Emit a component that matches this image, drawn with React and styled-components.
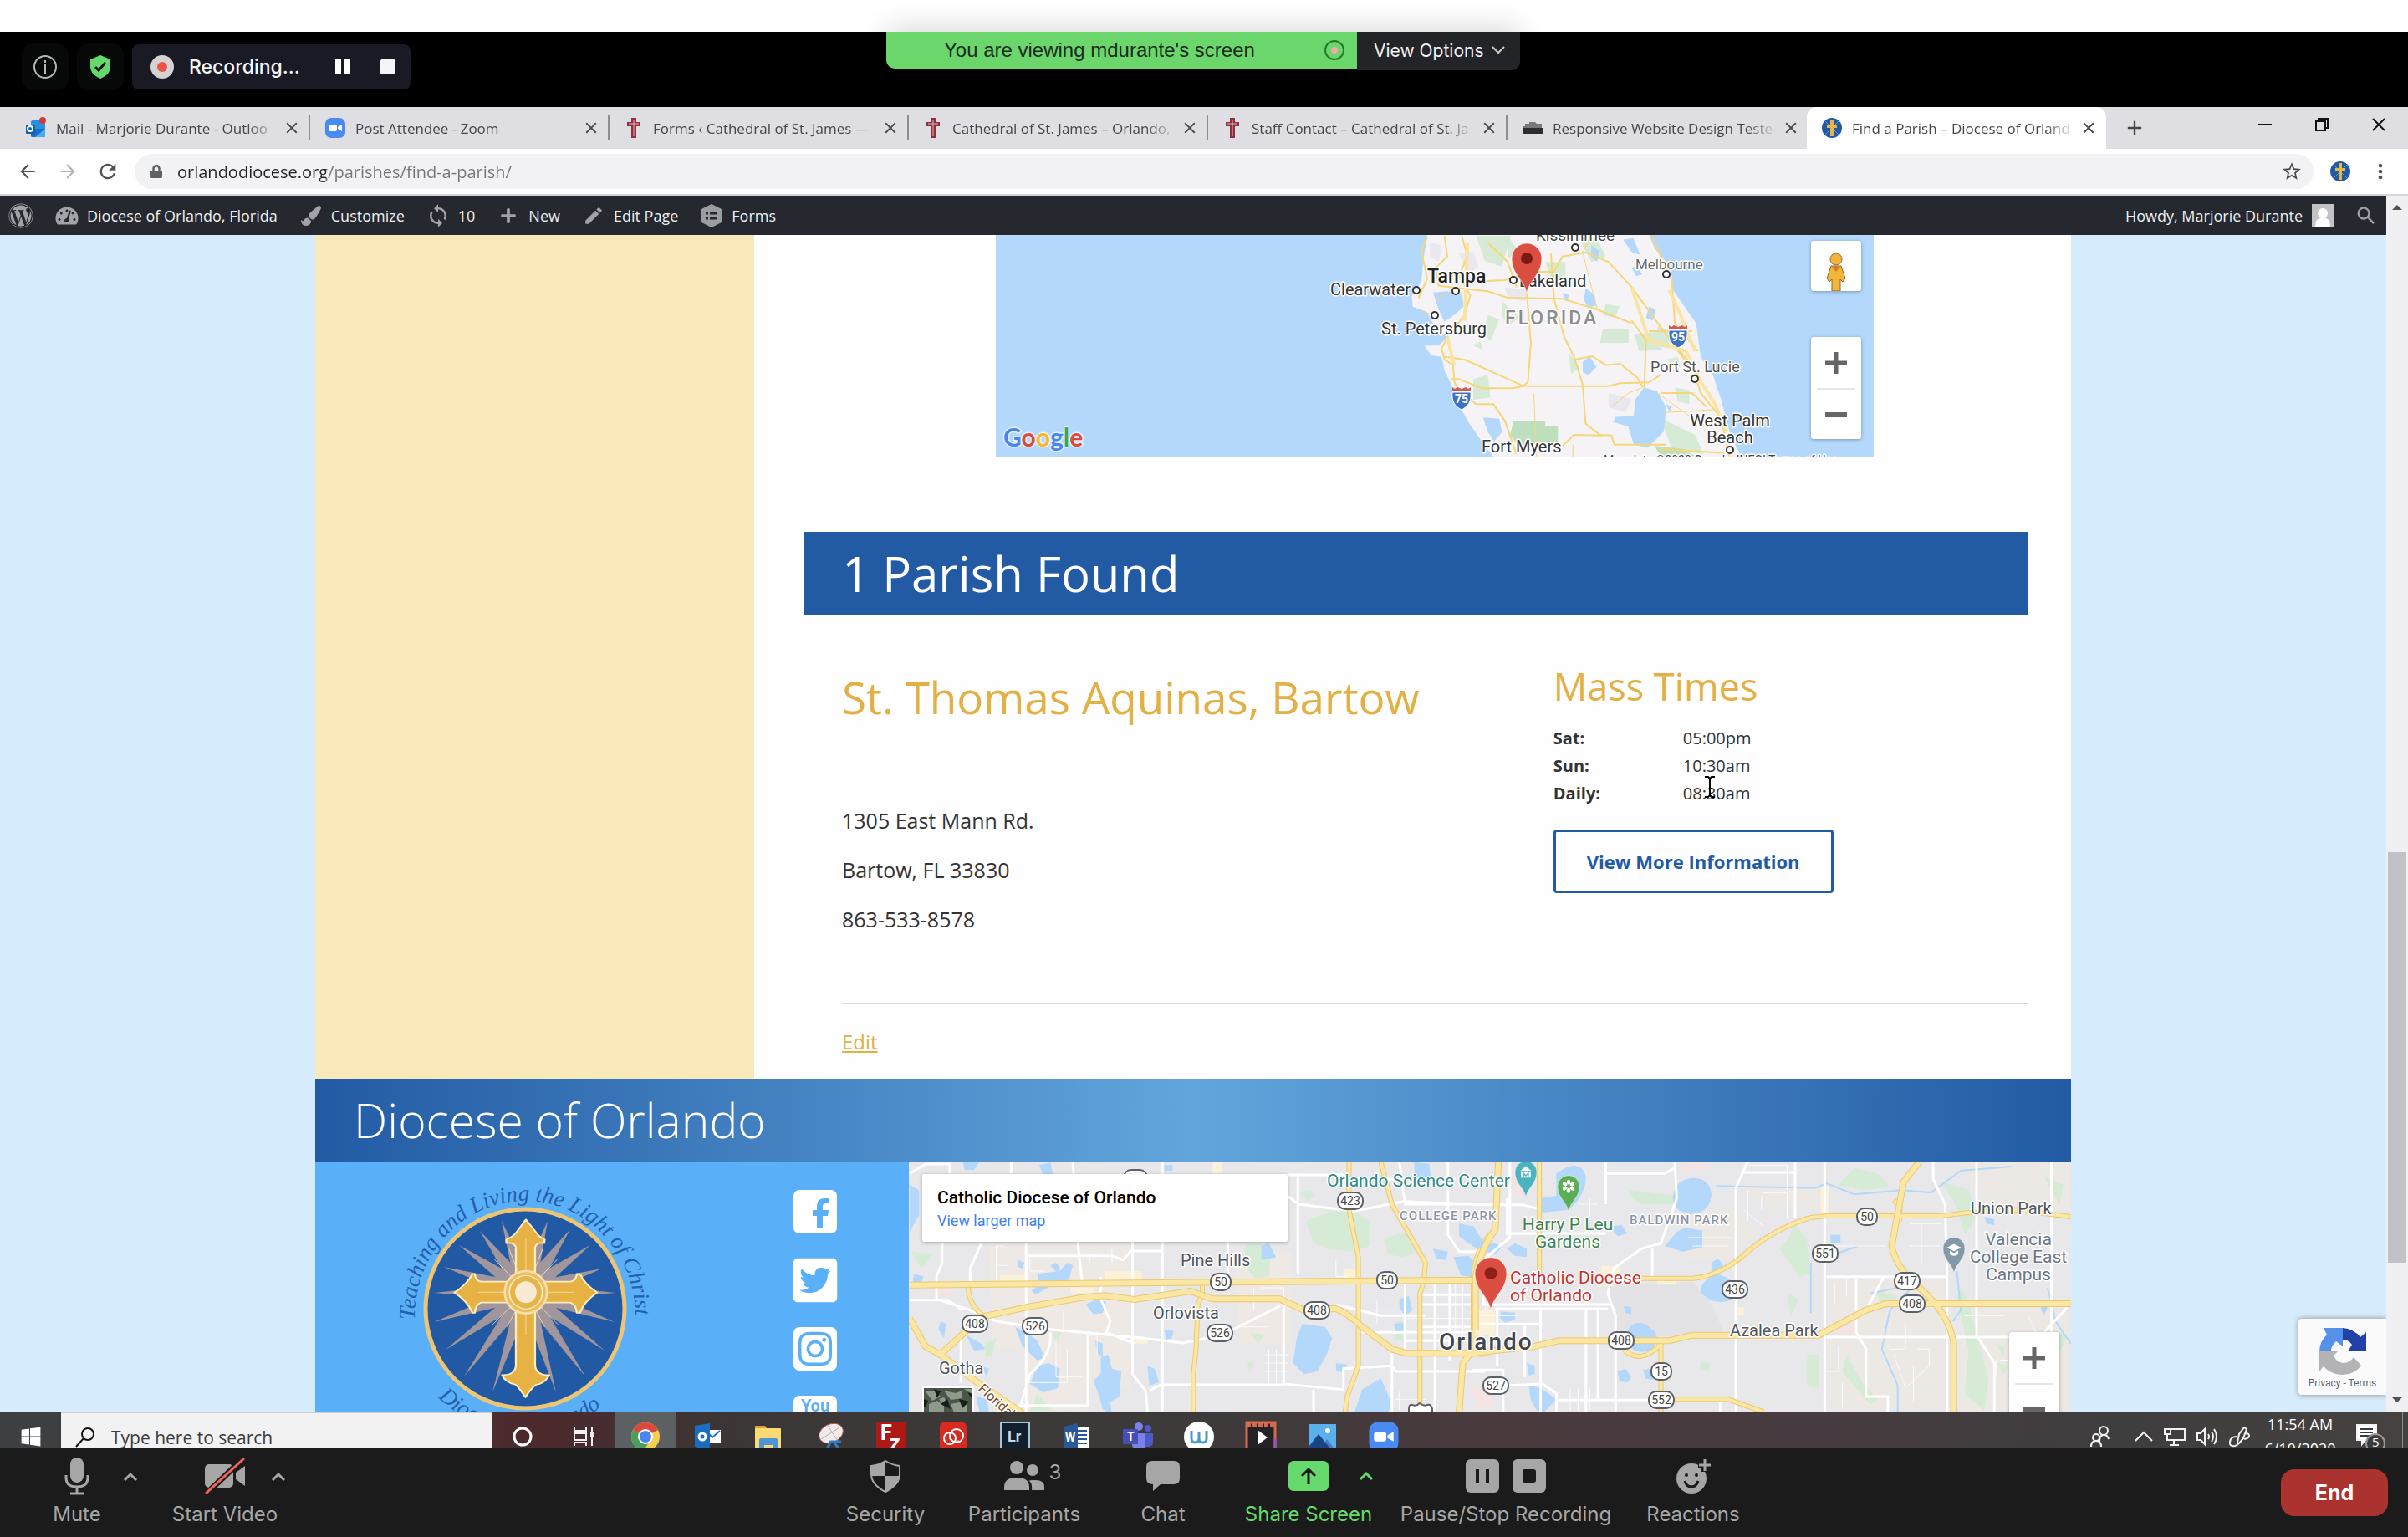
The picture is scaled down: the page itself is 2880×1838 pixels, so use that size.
import styled, { createGlobalStyle, css } from 'styled-components'
import { FaTwitterSquare, FaInstagram, FaWordpress, FaTachometerAlt, FaPaintBrush, FaPlus, FaWindows, FaLock } from 'react-icons/fa'
import { MdSync, MdEdit, MdStarBorder, MdMoreVert, MdSearch, MdClose, MdAdd, MdRefresh, MdArrowBack, MdArrowForward } from 'react-icons/md'

const tabs = [
  { title: 'Mail - Marjorie Durante - Outloo', icon: 'outlook' },
  { title: 'Post Attendee - Zoom', icon: 'zoom' },
  { title: 'Forms ‹ Cathedral of St. James —', icon: 'cross' },
  { title: 'Cathedral of St. James – Orlando,', icon: 'cross' },
  { title: 'Staff Contact – Cathedral of St. Ja', icon: 'cross' },
  { title: 'Responsive Website Design Teste', icon: 'media' },
  { title: 'Find a Parish – Diocese of Orland', icon: 'diocese', active: true },
]

const massTimes = [
  ['Sat:', '05:00pm'],
  ['Sun:', '10:30am'],
  ['Daily:', '08:30am'],
]

const Favicon = ({ name }) => {
  if (name === 'outlook') {
    return (
      <svg width="26" height="26" viewBox="0 0 26 26">
        <rect x="7" y="4" width="17" height="20" rx="2" fill="#2a8fe0" />
        <path d="M7 14h17v8a2 2 0 0 1-2 2H9a2 2 0 0 1-2-2z" fill="#1a6cc4" />
        <path d="M24 14 12 24h10a2 2 0 0 0 2-2z" fill="#3fb0f5" />
        <rect x="1" y="9" width="11" height="11" rx="1" fill="#1160b7" />
        <circle cx="6" cy="14" r="3" fill="none" stroke="#fff" strokeWidth="2" />
        <circle cx="21" cy="4" r="4" fill="#d33b3b" />
      </svg>
    )
  }
  if (name === 'zoom') return <ZoomLogo size={26} />
  if (name === 'cross') {
    return (
      <svg width="24" height="26" viewBox="0 0 24 26">
        <path d="M9 1h6v5h5v5h-5v14H9V11H4V6h5z" fill="#8d2f3c" />
        <path d="M12 3v20M6 8h12" stroke="#e5b9bc" strokeWidth="1" />
      </svg>
    )
  }
  if (name === 'media') {
    return (
      <svg width="26" height="24" viewBox="0 0 26 24">
        <path d="M1 10h3V7h5V5h7l2 2h6v7H1z" fill="#77787c" />
        <path d="M1 12h24v7H1z" fill="#2c2d31" />
      </svg>
    )
  }
  return (
    <svg width="26" height="26" viewBox="0 0 26 26">
      <circle cx="13" cy="13" r="12" fill="#1f5aa5" />
      <path d="m5 5 16 16M21 5 5 21" stroke="#7d93b5" />
      <path d="M11 3h4v6h4v4h-4v10h-4V13H7V9h4z" fill="#e7b649" />
    </svg>
  )
}

const ZoomLogo = ({ size }) => (
  <svg width={size} height={size} viewBox="0 0 26 26">
    <rect x="1" y="1" width="24" height="24" rx="7" fill="#4a8af4" />
    <rect x="5" y="9" width="10" height="8" rx="2" fill="#fff" />
    <path d="m16 12 5-3v8l-5-3z" fill="#fff" />
  </svg>
)

const Pin = ({ x, y, r, fill, dot, children }) => (
  <g transform={`translate(${x} ${y}) scale(${r / 18})`}>
    <path d="M0 0C-2-16-18-22-18-42a18 18 0 0 1 36 0C18-22 2-16 0 0z" fill={fill} stroke="#fff" strokeOpacity=".6" />
    {dot && <circle cy="-42" r="7" fill={dot} />}
    {children}
  </g>
)

const floridaLabels = [
  ['Clearwater', 400, 72],
  ['Lakeland', 626, 62],
  ['St. Petersburg', 461, 119],
  ['Fort Myers', 581, 260],
  ['West Palm', 878, 229, 'middle'],
  ['Beach', 878, 249, 'middle'],
]

const floridaTowns = [[693, 15], [802, 47], [550, 67], [503, 66], [619, 54], [525, 96], [836, 172], [878, 257]]

const Interstate = ({ x, y, n }) => (
  <g transform={`translate(${x} ${y})`}>
    <path d="M-11-7H11C12 4 8 10 0 14-8 10-12 4-11-7z" fill="#3f72c0" stroke="#fff" />
    <path d="M-11-8v-5l3 2 3-2 5 2 5-2 3 2 3-2v5z" fill="#ce5b56" />
    <text y="6" fontSize="14" fontWeight="700" fill="#fff" textAnchor="middle">{n}</text>
  </g>
)

const FloridaMap = () => (
  <MapSvg viewBox="0 0 1050 265" preserveAspectRatio="xMidYMid slice">
    <rect width="1050" height="265" fill="#b3d8fb" />
    <Terrain transform="translate(-11 -11) scale(.6888 .3333)">
      <path fill="#f5f3f6" d="M765 30 758 130 755 200 738 250 740 290 765 310 775 350 800 400 785 430 760 430 772 465 790 470 795 520 805 560 820 640 835 700 850 745 865 790 880 828H1310L1290 740 1275 620 1262 540 1240 470 1232 350 1192 230 1188 150 1160 80 1150 30z" />
      <path fill="#d6ead5" d="M850 36h60l-15 110-30-20zM970 130h35v60h-25zM1030 50h30l15 60-25 20zM895 270l30 60-20 30-10-40zM870 320l20 15-15 80-12-30zM1070 370h45v50h-50zM1125 390l40-10 8 65-40 5zM845 550l25-15 5 80-30 10zM1165 360l25 20-5 60-20-10zM1170 690l60 60 15 70-55-20zM1010 450l20 60-15 20zM1180 480l20-10 5 40zM1195 580l25 10v50l-20-10zM1075 280l25 10-10 40-20-10zM905 36l20 60-20 20zM845 430l12-15 4 30z" />
      <path fill="#bddfbd" d="M915 700h55v20h22v60h-35l-30 20-18-50zM1160 790l50 10 20 26h-60zM1340 36h-10z" />
      <path fill="#e9e8ee" d="M820 100l25-10 10 60-20 20zM1080 600l40 20-10 50-30-20zM770 60l20 10-5 60-15-20zM900 220l40 10-5 40-30-10z" />
      <path fill="#b3d8fb" d="M775 240 800 235 826 245 828 290 815 315 795 345 785 300zM1142 580l22 14 16 58-4 86-28 58-24-10-10-66-26-16 4-18 32-6 2-56zM1035 490l12-22 12 38-14 30-10-12zM862 688l28 4 5 48-14 34-11-36zM1040 225l15 20 4 40-14 10-8-30zM1050 70l14 20-4 40-10-20zM1105 50l18-6 12 60-14-8zM1150 290l12 10-5 40-12-10zM1180 640l10 10-4 20zM1120 150l10-5 8 30-10 6zM1000 240l12 10-6 22z" />
      <g fill="none" stroke="#f5d777" strokeWidth="2">
        <path d="M795 36 800 110 780 150 785 215 825 225 870 235 905 258 1000 262 1060 300 1120 350M825 36 835 110 820 180 840 250 830 320 800 400 790 440 795 480 810 500 812 560 820 590 850 640 880 640 900 700 920 820M840 200 900 195 950 165 985 165 1000 110 1040 95 1080 130 1120 220 1240 560M938 240 945 420 940 560 932 575M870 60 905 130 920 220M980 100 985 260 1003 400 1020 470 1035 570 1040 710 1065 750 1085 752 1090 785H1180M805 550H820L860 583H915L932 575H1080L1100 565 1150 562 1170 535M795 470 830 480 900 545 932 575M1020 480 1052 468 1075 500 1100 495 1130 545 1140 580M1120 340 1145 410 1142 580M1150 378H1225M765 40 755 90 765 190 750 260M1155 36 1190 200 1195 350 1235 450M1145 410 1200 440 1225 500 1240 600 1275 690 1290 828M1170 600 1225 600 1250 650M1170 800 1280 815M1000 790 1020 750 1070 752" />
        <path d="M775 265 805 240 835 240M755 310 785 320M1085 650 1115 600 1140 580M1180 670 1260 660M1165 600 1225 690M950 600 955 828M1018 785V828M1050 36 1035 95 1060 300" strokeWidth="1" />
      </g>
      <g fill="none" stroke="#f9e5a0" strokeWidth="4">
        <path d="M1120 220 1150 410 1215 450 1240 560 1262 630 1285 740M800 400 812 500M1185 230 1205 320 1230 450M835 60 830 340" />
      </g>
    </Terrain>
    {floridaTowns.map(([x, y]) => (
      <circle key={`${x}-${y}`} cx={x} cy={y} r="4" fill="#fff" stroke="#333" strokeWidth="2" />
    ))}
    <Labels>
      {floridaLabels.map(([text, x, y, anchor]) => (
        <text key={text} x={x} y={y} textAnchor={anchor} fontSize="20" fill="#333">{text}</text>
      ))}
      <text x="693" y="7" fontSize="19" fill="#444" textAnchor="middle">Kissimmee</text>
      <text x="516" y="57" fontSize="23" fontWeight="500" fill="#222">Tampa</text>
      <text x="765" y="41" fontSize="17" fill="#6b6b6b">Melbourne</text>
      <text x="783" y="164" fontSize="18" fill="#555">Port St. Lucie</text>
      <text x="609" y="107" fontSize="23" fontWeight="500" fill="#8c8c90" letterSpacing="3">FLORIDA</text>
      <text x="727" y="274" fontSize="14" fill="#444">Map data ©2020 Google, INEGI    Terms of Use</text>
    </Labels>
    <Interstate x={816} y={121} n="95" />
    <Interstate x={557} y={195} n="75" />
    <Pin x={635} y={70} r={18} fill="#db4f42" dot="#7a1a12" />
    <GoogleText x="9" y="253">
      <tspan fill="#4a84ee">G</tspan><tspan fill="#dc4a3d">o</tspan><tspan fill="#f2b928">o</tspan>
      <tspan fill="#4a84ee">g</tspan><tspan fill="#3aa757">l</tspan><tspan fill="#dc4a3d">e</tspan>
    </GoogleText>
  </MapSvg>
)

const neighborhoods = [
  ['Pine Hills', 325, 125],
  ['Orlovista', 292, 188],
  ['Gotha', 36, 254],
  ['Azalea Park', 982, 209],
  ['Union Park', 1270, 63],
]

const landmarks = [
  ['Orlando Science Center', 500, 30, '#2f8a86'],
  ['Harry P Leu', 788, 82, '#3a8450', 'middle'],
  ['Gardens', 788, 103, '#3a8450', 'middle'],
  ['Valencia', 1327, 100, '#6c7684', 'middle'],
  ['College East', 1327, 121, '#6c7684', 'middle'],
  ['Campus', 1327, 142, '#6c7684', 'middle'],
  ['Catholic Diocese', 719, 146, '#c5322b'],
  ['of Orlando', 719, 167, '#c5322b'],
]

const routes = [
  [423, 528, 47], [50, 373, 144], [50, 572, 142], [408, 79, 194], [526, 151, 197], [526, 372, 205],
  [408, 488, 178], [50, 1146, 66], [551, 1096, 110], [436, 988, 153], [417, 1194, 143], [408, 1200, 170],
  [408, 852, 214], [15, 900, 251], [552, 900, 285], [527, 702, 268],
]

const westHighways = 'M18 470 850 460 1530 452M18 590 60 690 100 720 200 820 320 930M100 720 210 585 330 550 480 515 540 508 620 522 770 492 830 520H1010L1070 558 1160 555Q1190 570 1230 620L1310 700 1350 715H1575M1490 925 1500 750 1530 700V440Q1535 350 1575 290'
const westRoads = 'M1195 28V200L1220 370V760L1190 870 1185 925M1280 28 1310 180 1400 390 1395 460 1385 500V925M802 470V500L790 540 785 700 778 790V925M175 475Q175 540 215 580'
const eastHighways = 'M10 630V440Q20 350 60 270L68 30M0 716 60 705 160 690 220 670H500L560 650H880L1000 560 1050 537H1519M1135 28 1095 100 1065 330Q1070 380 1110 450 1210 560 1222 680V925'
const eastRoads = 'M430 446H560Q620 440 680 375 760 270 860 228L900 222H1190L1260 210 1380 200 1519 225M172 28V440M480 680V925M480 880H650L740 925M385 700Q430 760 480 680M0 440H100M1070 180Q1090 140 1085 240'

const OrlandoMap = () => (
  <MapSvg viewBox="0 0 1390 299" preserveAspectRatio="xMinYMin slice">
    <rect width="1390" height="299" fill="#e8e7ea" />
    <Terrain transform="translate(-7 -9) scale(.4464 .3333)">
      <path fill="#eee9e4" d="M230 320h380v520H500v80H330V700H240zM890 350h150v330H900z" />
      <path fill="#fbf1d8" d="M260 435h70v30h-70zM540 420h100v50H540zM610 660h45v20h-45zM1180 410h35v35h-35zM830 28h25v40h-25zM450 478h60v20h-60z" />
      <path fill="#f5e2e2" d="M80 480h50v30H80zM1520 830h48v40h-48z" />
      <path fill="#d5ebd5" d="M1080 240l60-30 60-10 50 40v90l-50 20-60-10-40-20zM920 320h40l25 60-5 60-40 5-30-60zM1290 300l60-20 40 60-50 30-40-10zM1065 140l25-10 15 20-20 20zM220 680l30-20-10 60-20 10zM400 640h25l-15 40zM20 350l60 10-30 50zM360 860l40 60h-60zM930 640l40 10-20 30zM920 740l20 10-10 30zM1320 600h20v70h-20z" />
      <path fill="#b3d8fb" d="M18 110l25 20v90l-25 60zM30 430l25 10-10 40-20-15zM160 28h45l-15 30h-25zM365 40l30-10 10 60-20 15zM700 40h22v20h-22zM360 430l60-10 20-30 15 10-10 50-50 25-40 30-10-15 20-20zM395 400l15-10 12 20-10 15zM310 380l15 10-5 20-12-5zM490 540l30-20 25 10-10 40-25 5zM300 620l30 20 30 30 20 60-20 10-40-50zM360 760l30-10 30 20-5 70-40 15-35-30zM530 730l20-10 10 50 25 10-5 90-25 20 5 45-25-20-10-50-15-50 20-30zM515 670l20 10v50l-15-15zM655 760l20 10 10 50-25 10zM700 630l25 5-5 25-15 5zM1070 610l60 10 20 40-15 60-25 60-35 10-30-40 10-90zM1210 925l20-80 50-40 30 90-10 30zM1330 520l25-10 10 50-20 20-15-30zM1315 610l25-5v35l-20-5zM960 330l20-10 20 50-40 10zM1370 30l40 5 5 60-25 10-20-30zM1490 250l40 10 20 50-30 15-30-30zM1420 340l40 10-5 30-25-5zM1475 370l40-5 30 40-10 40-40-10zM1160 750l30 5-10 30-20-10zM170 650l40 30 10 20-30 5zM195 870l30 10 5 45h-25zM210 760l20 10-5 30zM100 600l15 10-5 50-15-30z" />
      <g fill="none" stroke="#fbfbfd" strokeWidth="1">
        <path d="M250 330v140M270 330h-20v70h30M340 360v60h40M560 340v50M500 360v30M410 660v140H480M440 700v120H340M520 640v80M430 560v70M370 560h60M940 480v80M960 480h60v70M900 620h80M980 700v130M1000 700v130M970 720h60M970 750h60M970 780h60M1160 380v60h30M1330 850v70M1320 880h80M1480 460v200M1500 460v200M1560 500v100M1340 590h200M1340 560h180M1270 520v90M1250 560h70" />
      </g>
      <g fill="none" stroke="#fff" strokeWidth="3">
        <path d="M18 70 60 36H125V70M105 318V390L90 440V520L180 560 250 600 400 630 640 660 750 678 800 665 870 640 1010 545M18 524H120L160 560M210 320 180 410V470M290 28V70M330 320V925M455 28 470 340 480 460M530 440V520L555 600 545 640 620 680M615 60V790L650 850 655 925M695 28V930M695 348H610L590 380 560 365H330M1058 70V430M1030 150 1060 180 1210 205 1340 170 1568 182M1030 75H1200M870 300V460M1020 540V825L1180 845M660 850 690 828H1020M1180 845V770L1310 760 1320 780H1560M1310 715V925M1345 460V715M1425 460V925M1465 450V740M1385 505H1530M1385 540H1530M1385 620H1530M1160 540 1280 580H1400M1460 28V290L1490 350H1550M1330 28 1345 180H1568M155 640V820M395 640Q400 720 340 790L310 925M310 902H495V640M1230 640H1530M1345 670H1530M1100 845V925M1385 460H1530M1260 90H1480" />
      </g>
      <Road d={westRoads} $edge />
      <Road d={westRoads} />
      <Road d={westHighways} $edge $wide />
      <Road d={westHighways} $wide />
    </Terrain>
    <Terrain transform="translate(673 -9) scale(.4719 .3333)">
      <path fill="#e3e3e5" d="M350 470 560 460 600 520 640 640 500 655H370z" />
      <path fill="#ece8e4" d="M520 200h140l70 80-90 100H540zM680 120h200v80H760zM910 450h300v90H1000l-90 80zM1000 570h200v340H900V670zM1240 28h280v170h-230zM1240 560h270v360h-270z" />
      <path fill="#fbf1d8" d="M330 400l50 5-20 70h-40zM470 450h50v15h-50zM670 550h20v30h-20zM10 560h50v90H10zM885 120h20v110h-20z" />
      <path fill="#f5e2e2" d="M108 75h30v70h-30zM535 28h60v30h-60zM925 620h50v30h-50zM10 850h40v60H10z" />
      <path fill="#d5ebd5" d="M820 250l30 60 10 120-30 10-50-100 20-30zM970 50l60 20 30 50-70 10-60-20zM1190 100l70 30 20 100-30 60-20-100zM1240 480l20 50 50 280-10 110-50-60 10-150-30-200zM950 720l40 100 40 60-20 20-70-120zM850 720h30v120l-30-10zM400 130l60 10 60 10-10 30h-80l-30-30zM580 740l25 10-5 30-20-10zM1330 680l20 10v40zM1450 80l50 30-10 70zM1020 490l60 20-30 50zM700 610h40l-10 40zM1470 630l40 20-20 60zM800 500l30 20-20 60zM1330 750l30 10-10 30z" />
      <path fill="#b3d8fb" d="M215 70q60-60 75 10 0 70-45 120l-65 10-10-50 45-10zM560 86q45 0 48 60-5 65-50 70-45-5-48-60 5-65 50-70zM520 280l20-15 45 10v60l-50 15-45-20zM620 430q-45 30-38 70 40 50 80 20 20-70-42-90zM608 390l15-15 15 20-10 30h-20zM430 605q-40 0-35 60 10 60 60 40 40-60-25-100zM90 340l20-20 30 20v30l-30-5zM350 260l30-5 15 30-25 10zM910 290h25v30h-25zM370 780l20-10 15 30-10 20-20-5zM435 775l20-5 5 40-20-5zM1300 225l25 10v20l-20-5zM75 565l35 5v25l-25 10-15-20zM145 830l30 10 40 40-30 45-20-5-15-40zM0 260l30 50 50 20-20 30-60-30zM140 750l20 10v30l-15 5zM170 620l10 10-5 25zM1440 540l20 10-10 30zM385 545l20 5v25l-15-5z" />
      <path fill="none" stroke="#b3d8fb" strokeWidth="2" d="M620 115 870 122 900 105 970 145 1090 130 1165 138 1240 60 1370 45M1130 460 1060 560 1040 700 1080 830V925M1230 420 1240 560 1220 600M980 330 920 360M860 390V570M1010 500 1080 480M1460 480 1480 600 1519 680" />
      <g fill="none" stroke="#fbfbfd" strokeWidth="1">
        <path d="M690 40h110v90M700 130v110M740 140h60v90M550 300h110M560 330h90M690 200l50 60M920 460v80M950 450v60M1060 600v100h40v-90M1070 720l30 120 60-80v-60h-30M930 690v90h-30M1110 250h80v150M1140 250v150M1110 330h80M1250 580h100M1330 740v60M1410 580l20 60M1340 740h40v90M940 820v90M1120 760v130M735 150v50M40 500v80M20 580h100M300 160v60M270 180h50M250 840v80M270 840v80M300 840v80M900 330h150" />
      </g>
      <g fill="none" stroke="#fff" strokeWidth="3">
        <path d="M340 28V70H490L515 50M340 70V180M0 182H130L165 195M97 28V300L30 380V540H350M88 285H340M515 28 520 160 490 280 480 320 430 340 360 410 345 500 365 580V925M458 340V440M700 28 670 120V925M690 66H820V28M820 66V230M90 160V290M895 28V925M975 450V640L1000 700V870H1055V925M900 657H1440L1510 550M1170 28V90L1200 180 1205 440H900M1280 28V650L1325 750V925M1470 28V925M1045 440 1000 560M60 555H345M290 560V925M175 560V925M135 610V800M20 610H180M0 775H80V925M95 830 180 825 215 860V925M215 883H480M320 560V880M630 880V925M1205 440V925M65 560V760" />
      </g>
      <Road d={eastRoads} $edge />
      <Road d={eastRoads} />
      <Road d={eastHighways} $edge $wide />
      <Road d={eastHighways} $wide />
    </Terrain>
    {routes.map(([n, x, y]) => {
      const w = n > 99 ? 30 : 24
      return (
        <g key={`${n}-${x}`}>
          <rect x={x - w / 2} y={y - 10} width={w} height="20" rx="9" fill="#fff" stroke="#5c6168" strokeWidth="2" />
          <text x={x} y={y + 5} fontSize="14" fill="#444" textAnchor="middle">{n}</text>
        </g>
      )
    })}
    <rect x="257" y="10" width="28" height="20" rx="9" fill="#fff" stroke="#5c6168" strokeWidth="2" />
    <path d="M598 296q0-6 4-5 5 2 9-2 5 4 9 2 5-1 6 5v6h-28z" fill="#fff" stroke="#5c6168" strokeWidth="2" />
    <Labels>
      {neighborhoods.map(([text, x, y]) => (
        <text key={text} x={x} y={y} fill="#505560" fontSize="20">{text}</text>
      ))}
      {landmarks.map(([text, x, y, fill, anchor]) => (
        <text key={text} x={x} y={y} fill={fill} textAnchor={anchor} fontSize="21">{text}</text>
      ))}
      <text x="587" y="70" fontSize="15" fontWeight="500" fill="#8d93a8" letterSpacing="1">COLLEGE PARK</text>
      <text x="862" y="75" fontSize="15" fontWeight="500" fill="#8d93a8" letterSpacing="1">BALDWIN PARK</text>
      <text x="634" y="225" fontSize="28" fontWeight="500" fill="#44464e" letterSpacing="2">Orlando</text>
      <text transform="translate(82 273) rotate(42)" fontSize="16" fill="#7a4a1c">Florida's</text>
    </Labels>
    <Pin x={696} y={178} r={19} fill="#db4f42" dot="#8f1f17" />
    <Pin x={738} y={43} r={13} fill="#4bb3bf">
      <path d="M-9-44 0-52 9-44zM-8-42H8V-33H-8z" fill="#fff" />
      <path d="M-4-35v-5l4 4 4-4v5" stroke="#4bb3bf" strokeWidth="2" fill="none" />
    </Pin>
    <Pin x={789} y={60} r={13} fill="#5cae52">
      {[0, 60, 120, 180, 240, 300].map((a) => (
        <ellipse key={a} cx="0" cy="-49" rx="3" ry="4" fill="#fff" transform={`rotate(${a} 0 -42)`} />
      ))}
    </Pin>
    <Pin x={1250} y={134} r={13} fill="#8299a8">
      <path d="m-12-43 12-6 12 6-12 6zM-7-38v6q7 5 14 0v-6l-7 4z" fill="#fff" />
    </Pin>
    <rect x="16" y="269" width="62" height="34" fill="#fff" />
    <rect x="18" y="271" width="58" height="30" fill="#4b564b" />
    <path d="M20 275h12l6 6-10 5zM42 274l14 3 8-3v9l-14 2zM24 290l10-4 8 6v8H24zM50 290l20-4v14H54zM66 272h10v6zM36 284l6-2 4 6-6 2z" fill="#8f9a8d" />
    <path d="M30 272l8 3-4 8zM60 284l12 3-8 8zM38 290l8-6 4 12zM18 284l5 2-3 8h-2zM70 276l6 2v6z" fill="#171c1a" />
  </MapSvg>
)

const rays = [
  [600, 1460], [655, 1460], [574, 1472], [682, 1470], [549, 1489], [706, 1489], [531, 1515], [720, 1517],
  [519, 1546], [736, 1546], [519, 1581], [735, 1581], [533, 1614], [723, 1615], [555, 1646], [700, 1646],
  [589, 1665], [665, 1665],
]

const ray = ([x, y], half) => {
  const dx = x - 629
  const dy = y - 1545
  const len = Math.hypot(dx, dy)
  const cx = 629 + (dx / len) * 34
  const cy = 1545 + (dy / len) * 34
  const ox = (-dy / len) * half
  const oy = (dx / len) * half
  return `629,1545 ${cx + ox},${cy + oy} ${x},${y} ${cx - ox},${cy - oy}`
}

const DioceseSeal = () => (
  <svg width="320" height="310" viewBox="467 1389 320 310">
    <defs>
      <path id="motto" d="M496 1578A132 139 0 1 1 760 1572" />
      <path id="diocese" d="M524 1671A149 149 0 0 0 732 1671" />
    </defs>
    <circle cx="628" cy="1565" r="119" fill="#2259a5" stroke="#eec572" strokeWidth="5" />
    {rays.map((tip) => <polygon key={tip.join()} points={ray(tip, 7)} fill="#a0969c" />)}
    <g transform="translate(370 1280) scale(.4591 .3333)">
      <path
        d="M564 535 590 580Q600 600 613 607L612 620Q592 615 588 635V758H680Q695 755 697 730H705Q715 765 750 797 715 830 705 870H697Q695 840 680 833H588V1060Q592 1095 625 1093L622 1100Q610 1125 590 1128 575 1145 563 1173 550 1145 538 1128 510 1120 502 1093 535 1095 538 1060V833H447Q433 840 431 870H425Q413 830 378 797 413 765 425 730H431Q433 755 447 758H538V635Q533 615 513 620V607Q530 598 540 580Z"
        fill="#e5b243" stroke="#fcecc0" strokeWidth="5" strokeLinejoin="round"
      />
      <path d="m480 675 84 120 84-120M475 915l89-120 86 120M520 640l44 155 44-155M564 600v350M440 796h250M515 920l49-125 49 125" fill="none" stroke="#fbe6b4" strokeWidth="2" />
      <ellipse cx="564" cy="796" rx="58" ry="80" fill="#f6dfae" />
      <ellipse cx="564" cy="796" rx="52" ry="72" fill="#e9bd5c" />
      <ellipse cx="564" cy="796" rx="43" ry="60" fill="#e5b548" stroke="#fbe9c0" strokeWidth="4" />
      <ellipse cx="564" cy="796" rx="28" ry="39" fill="#faead3" />
    </g>
    <SealText><textPath href="#motto">Teaching and Living the Light of Christ</textPath></SealText>
    <SealText><textPath href="#diocese">Diocese of Orlando</textPath></SealText>
  </svg>
)

const AppIcon = ({ name }) => {
  const box = { width: 38, height: 38, viewBox: '0 0 38 38' }
  switch (name) {
    case 'Cortana':
      return <svg {...box}><circle cx="19" cy="19" r="10" fill="none" stroke="#fff" strokeWidth="3" /></svg>
    case 'Task View':
      return <svg {...box} fill="none" stroke="#f2f2f2" strokeWidth="2"><path d="M8 8v4h14V8M8 30v-4h14v4M8 15h14v8H8zM29 8v22" /><path d="M29 13v6" strokeWidth="4" /></svg>
    case 'Chrome':
      return (
        <svg {...box}>
          <circle cx="19" cy="19" r="17" fill="#f8cf4f" />
          <path d="M19 19 4 11A17 17 0 0 1 34 11z" fill="#d94a3d" />
          <path d="M19 19 4 11a17 17 0 0 0 13 25l8-14z" fill="#4a9f5c" />
          <circle cx="19" cy="19" r="8" fill="#4a84ee" stroke="#fff" strokeWidth="2" />
        </svg>
      )
    case 'Outlook':
      return (
        <svg {...box}>
          <rect x="18" y="11" width="17" height="16" fill="#fff" />
          <path d="m19 14 6 6 9-8" fill="none" stroke="#1c70c4" strokeWidth="2" />
          <path d="M4 6 22 3v32L4 31z" fill="#1c6cc2" />
          <circle cx="13" cy="19" r="4" fill="none" stroke="#fff" strokeWidth="3" />
        </svg>
      )
    case 'File Explorer':
      return (
        <svg {...box}>
          <path d="M3 6h12l3 4H3z" fill="#dca13b" />
          <rect x="3" y="9" width="31" height="25" rx="1" fill="#fada72" />
          <path d="M8 36V23q0-2 2-2h18q2 0 2 2v13h-6v-7H14v7z" fill="#4f94d6" />
        </svg>
      )
    case 'Snipping Tool':
      return (
        <svg {...box}>
          <ellipse cx="20" cy="15" rx="15" ry="11" fill="#f1eceb" stroke="#9b5a52" transform="rotate(-25 20 15)" />
          <path d="m8 22 22-14M16 6l12 18" stroke="#b5aeb0" />
          <path d="m20 24-6 12M22 24l8 10M20 25h12" stroke="#2f7cc4" strokeWidth="3" />
        </svg>
      )
    case 'FileZilla':
      return <svg {...box}><rect x="1" y="1" width="36" height="36" fill="#ad1a15" /><IconText x="6" y="23" fontSize="25">F</IconText><IconText x="17" y="35" fontSize="25">z</IconText></svg>
    case 'Creative Cloud':
      return (
        <svg {...box}>
          <rect x="3" y="2" width="32" height="34" rx="5" fill="#d92a22" />
          <circle cx="15" cy="21" r="7" fill="none" stroke="#fff" strokeWidth="2" />
          <circle cx="23" cy="18" r="8" fill="none" stroke="#fff" strokeWidth="2" />
          <path d="m15 21 3 3q4 3 8 0" fill="none" stroke="#fff" strokeWidth="2" />
        </svg>
      )
    case 'Lightroom':
      return <svg {...box}><rect x="2" y="2" width="34" height="36" fill="#10202d" stroke="#a9c4d4" strokeWidth="2" /><IconText x="10" y="25" fontSize="18" $color="#c5dbe8">Lr</IconText></svg>
    case 'Word':
      return (
        <svg {...box}>
          <rect x="16" y="8" width="18" height="25" fill="#fff" />
          <path d="M20 12h12M20 17h12M20 22h12M20 27h12" stroke="#2a569a" strokeWidth="2" />
          <path d="M4 7 21 3v33L4 32z" fill="#2a569a" />
          <IconText x="6" y="25" fontSize="14">W</IconText>
        </svg>
      )
    case 'Teams':
      return (
        <svg {...box}>
          <circle cx="20" cy="7" r="5" fill="#7b83eb" /><circle cx="31" cy="9" r="4" fill="#5059c9" />
          <path d="M26 15h11v10q0 6-6 6h-5z" fill="#5059c9" />
          <path d="M12 15h16v14q-2 8-8 8t-8-8z" fill="#7b83eb" />
          <rect x="1" y="10" width="18" height="18" rx="1" fill="#464eb8" />
          <IconText x="6" y="24" fontSize="14">T</IconText>
        </svg>
      )
    case 'Webex':
      return <svg {...box}><circle cx="19" cy="19" r="18" fill="#fff" /><path d="M10 12v9q0 5 4 5 5 0 5-5v-8 8q0 5 5 5 4 0 4-5v-9" fill="none" stroke="#4a9bc9" strokeWidth="3" /></svg>
    case 'Video Editor':
      return (
        <svg {...box}>
          <rect x="2" y="2" width="34" height="36" fill="#232327" stroke="#d9694e" strokeWidth="3" />
          <path d="M2 4h34" stroke="#d9694e" strokeWidth="6" strokeDasharray="5 2" />
          <path d="M36 22v16" stroke="#9256c4" strokeWidth="3" />
          <path d="m15 11 12 9-12 9z" fill="#fff" />
        </svg>
      )
    case 'Photos':
      return (
        <svg {...box}>
          <rect x="3" y="4" width="32" height="34" fill="#5ab0ea" />
          <path d="m24 22 11 14v2H14z" fill="#4f79c8" /><path d="m3 30 11-14 18 22H3z" fill="#1a4583" />
          <circle cx="25" cy="12" r="3" fill="#fff" />
        </svg>
      )
    default:
      return <ZoomLogo size={38} />
  }
}

const taskbarApps = [
  'Cortana', 'Task View', 'Chrome', 'Outlook', 'File Explorer', 'Snipping Tool', 'FileZilla', 'Creative Cloud',
  'Lightroom', 'Word', 'Teams', 'Webex', 'Video Editor', 'Photos', 'Zoom',
]

const Caret = ({ color = '#a6a6a6' }) => (
  <svg width="18" height="12" viewBox="0 0 18 12"><path d="m2 10 7-7 7 7" fill="none" stroke={color} strokeWidth="3" /></svg>
)

const ZoomControl = () => (
  <ZoomBox>
    <ZoomButton aria-label="Zoom in"><svg width="28" height="28" viewBox="0 0 28 28"><path d="M14 1v26M1 14h26" stroke="#666" strokeWidth="5" /></svg></ZoomButton>
    <ZoomButton aria-label="Zoom out"><svg width="28" height="28" viewBox="0 0 28 28"><path d="M1 14h26" stroke="#666" strokeWidth="6" /></svg></ZoomButton>
  </ZoomBox>
)

const MeetingHeader = () => (
  <>
    <TitleStrip />
    <MeetingBar>
      <BadgeButton aria-label="Meeting information">
        <svg width="30" height="30" viewBox="0 0 30 30" fill="none" stroke="#b5b5b5" strokeWidth="2"><circle cx="15" cy="15" r="13" /><path d="M15 12v11M15 7v3" /></svg>
      </BadgeButton>
      <BadgeButton aria-label="Encryption">
        <svg width="28" height="30" viewBox="0 0 28 30"><path d="m14 1 12 5v8c0 8-5 12-12 15C7 26 2 22 2 14V6z" fill="#66d96c" /><path d="m8 15 4 4 8-9" fill="none" stroke="#111" strokeWidth="3" /></svg>
      </BadgeButton>
      <RecordingPill>
        <svg width="28" height="28" viewBox="0 0 28 28"><circle cx="14" cy="14" r="14" fill="#d3d3d6" /><circle cx="14" cy="14" r="6" fill="#f0524a" /></svg>
        <span>Recording...</span>
        <PillButton aria-label="Pause recording"><svg width="18" height="18"><path d="M0 0h7v18H0zM11 0h7v18h-7z" fill="#fff" /></svg></PillButton>
        <PillButton aria-label="Stop recording"><svg width="18" height="18"><rect width="18" height="18" rx="2" fill="#f5f5f5" /></svg></PillButton>
      </RecordingPill>
      <ShareBanner>
        <ShareMessage>
          <span>You are viewing mdurante's screen</span>
          <svg width="24" height="24" viewBox="0 0 24 24"><circle cx="12" cy="12" r="11" fill="none" stroke="#257a2c" strokeWidth="2" /><circle cx="12" cy="12" r="4" fill="#f2a9a4" /></svg>
        </ShareMessage>
        <ViewOptions>
          View Options
          <svg width="16" height="10" viewBox="0 0 16 10"><path d="m1 1 7 7 7-7" fill="none" stroke="#ccc" strokeWidth="2" /></svg>
        </ViewOptions>
      </ShareBanner>
    </MeetingBar>
  </>
)

const Browser = () => (
  <>
    <TabStrip>
      {tabs.map((tab, i) => (
        <Tab key={tab.title} $active={tab.active} $divider={i < 5}>
          <Favicon name={tab.icon} />
          <TabTitle>{tab.title}</TabTitle>
          <IconButton aria-label="Close tab"><MdClose size={22} /></IconButton>
        </Tab>
      ))}
      <NewTab aria-label="New tab"><MdAdd size={28} /></NewTab>
      <WindowControls>
        <IconButton aria-label="Minimize"><svg width="16" height="16"><path d="M0 8h16" stroke="#111" strokeWidth="2" /></svg></IconButton>
        <IconButton aria-label="Restore"><svg width="16" height="16" fill="none" stroke="#111" strokeWidth="2"><path d="M1 4h11v11H1zM4 4V1h11v11h-3" /></svg></IconButton>
        <IconButton aria-label="Close"><svg width="16" height="16"><path d="m1 1 14 14M15 1 1 15" stroke="#111" strokeWidth="2" /></svg></IconButton>
      </WindowControls>
    </TabStrip>
    <Toolbar>
      <ToolButton aria-label="Back"><MdArrowBack size={26} /></ToolButton>
      <ToolButton aria-label="Forward" $dim><MdArrowForward size={26} /></ToolButton>
      <ToolButton aria-label="Reload"><MdRefresh size={28} /></ToolButton>
      <Omnibox>
        <FaLock size={16} color="#5f6368" />
        <UrlInput aria-label="Address" defaultValue="orlandodiocese.org/parishes/find-a-parish/" />
        <MdStarBorder size={26} color="#4b4c50" />
      </Omnibox>
      <ToolButton aria-label="Extension"><Favicon name="diocese" /></ToolButton>
      <ToolButton aria-label="Menu"><MdMoreVert size={28} /></ToolButton>
    </Toolbar>
  </>
)

const AdminBar = () => (
  <AdminRow>
    <AdminLink href="#" aria-label="About WordPress"><FaWordpress size={30} /></AdminLink>
    <AdminLink href="#"><FaTachometerAlt size={24} /><span>Diocese of Orlando, Florida</span></AdminLink>
    <AdminLink href="#"><FaPaintBrush size={24} /><span>Customize</span></AdminLink>
    <AdminLink href="#"><MdSync size={30} /><span>10</span></AdminLink>
    <AdminLink href="#"><FaPlus size={20} /><span>New</span></AdminLink>
    <AdminLink href="#"><MdEdit size={26} /><span>Edit Page</span></AdminLink>
    <AdminLink href="#">
      <svg width="28" height="28" viewBox="0 0 28 28"><path d="M14 0 26 6v16l-12 6L2 22V6z" fill="#9b9da0" /><path d="M7 11h3M12 11h9M7 17h3M12 17h9" stroke="#25282e" strokeWidth="3" /></svg>
      <span>Forms</span>
    </AdminLink>
    <Howdy>
      Howdy, Marjorie Durante
      <svg width="26" height="27" viewBox="0 0 26 27"><rect width="26" height="27" fill="#c3c3c3" /><circle cx="13" cy="11" r="6" fill="#fff" /><path d="M4 27q0-11 9-11t9 11z" fill="#fff" /></svg>
    </Howdy>
    <MdSearch size={28} color="#a0a3a7" />
  </AdminRow>
)

const ParishPage = () => (
  <Site>
    <Body>
      <Sidebar />
      <Main>
        <MapFrame>
          <FloridaMap />
          <MapControls>
            <Pegman aria-label="Street View">
              <svg width="28" height="46" viewBox="0 0 28 46"><circle cx="14" cy="8" r="7" fill="#f2b53c" stroke="#8a6a2a" /><path d="M8 16h12l5 15-3 4-3-3v14H9V32l-3 3-3-4z" fill="#f2b53c" stroke="#8a6a2a" /><path d="m9 17 5 6 5-6z" fill="#d9772b" /></svg>
            </Pegman>
            <ZoomControl />
          </MapControls>
        </MapFrame>
        <FoundTitle>1 Parish Found</FoundTitle>
        <Result>
          <div>
            <ParishName>St. Thomas Aquinas, Bartow</ParishName>
            <Address>
              <p>1305 East Mann Rd.</p>
              <p>Bartow, FL 33830</p>
              <p>863-533-8578</p>
            </Address>
          </div>
          <div>
            <MassTitle>Mass Times</MassTitle>
            <TimesTable>
              <tbody>
                {massTimes.map(([day, time]) => (
                  <tr key={day}><th scope="row">{day}</th><td>{time}</td></tr>
                ))}
              </tbody>
            </TimesTable>
            <MoreButton>View More Information</MoreButton>
            <TextCursor width="14" height="28" viewBox="0 0 14 28"><path d="M1 2h4l2 2 2-2h4M7 3v22M1 26h4l2-2 2 2h4" fill="none" stroke="#000" strokeWidth="2" /></TextCursor>
          </div>
        </Result>
        <EditRow><a href="#">Edit</a></EditRow>
      </Main>
    </Body>
    <FooterTitle>Diocese of Orlando</FooterTitle>
    <Footer>
      <FooterLeft>
        <DioceseSeal />
        <SocialLinks>
          <a href="#" aria-label="Facebook">
            <SocialTile><svg width="52" height="52" viewBox="0 0 52 52"><path d="M28 46V31h-5v-7h5v-5q0-9 9-9h5v6h-4q-3 0-3 4v4h7l-1 7h-6v15z" fill="#59b0f9" /></svg></SocialTile>
          </a>
          <a href="#" aria-label="Twitter"><FaTwitterSquare size={60} /></a>
          <a href="#" aria-label="Instagram"><SocialTile><FaInstagram size={46} /></SocialTile></a>
          <a href="#" aria-label="YouTube"><SocialTile $top>You</SocialTile></a>
        </SocialLinks>
      </FooterLeft>
      <FooterMap>
        <OrlandoMap />
        <PlaceCard>
          <strong>Catholic Diocese of Orlando</strong>
          <a href="#">View larger map</a>
        </PlaceCard>
        <FooterControls><ZoomControl /></FooterControls>
      </FooterMap>
    </Footer>
  </Site>
)

const Recaptcha = () => (
  <RecaptchaBadge>
    <svg width="56" height="56" viewBox="0 0 56 56">
      <path d="M0 28A28 28 0 0 1 9 8L5 0H28V22L20 16Q14 21 14 28z" fill="#5591ea" />
      <path d="M28 0Q41 1 49 11L56 5V28H34L39 20Q35 14 28 14z" fill="#2140a8" />
      <path d="M0 28H22L17 33Q21 42 29 42 36 42 41 35L50 45Q42 56 28 56 14 56 5 46L0 52z" fill="#b3b3b5" />
    </svg>
    <small>Privacy - Terms</small>
  </RecaptchaBadge>
)

const Taskbar = () => (
  <TaskRow>
    <StartButton aria-label="Start"><FaWindows size={26} /></StartButton>
    <SearchBox>
      <svg width="26" height="26" viewBox="0 0 26 26" fill="none" stroke="#111" strokeWidth="2"><circle cx="16" cy="9" r="7" /><path d="M11 14 2 24" /></svg>
      <input aria-label="Search" placeholder="Type here to search" />
    </SearchBox>
    <TaskApps>
      {taskbarApps.map((name) => (
        <TaskApp key={name} aria-label={name} $active={name === 'Chrome'}><AppIcon name={name} /></TaskApp>
      ))}
    </TaskApps>
    <Tray>
      <svg width="24" height="26" viewBox="0 0 24 26"><circle cx="16" cy="6" r="5" /><path d="M11 19q0-8 5-8t6 5" /><circle cx="7" cy="14" r="4" /><path d="M1 25q0-7 6-7t6 7" /></svg>
      <svg width="22" height="14" viewBox="0 0 22 14"><path d="m1 12 10-10 10 10" /></svg>
      <svg width="26" height="24" viewBox="0 0 26 24"><path d="M8 3h17v13H4v-5M12 16v5M7 22h11M1 3h7v6H1zM4 9v3" /></svg>
      <svg width="26" height="24" viewBox="0 0 26 24"><path d="M1 8h4l5-5v18l-5-5H1zM14 9q2 3 0 6M18 6q4 6 0 12M21 3q6 9 0 18" /></svg>
      <svg width="26" height="26" viewBox="0 0 26 26"><path d="m10 20 2-10 6-8 3 2-4 11-5 6M9 13q-7 0-8 6t6 5q4-1 5-4M18 10q6-2 6 2 0 3-6 4" /></svg>
      <Clock><span>11:54 AM</span><span>6/10/2020</span></Clock>
      <svg width="36" height="32" viewBox="0 0 36 32"><path d="M1 2h23v18H11l-4 5v-5H1z" fill="#fff" /><path d="M5 7h15M5 11h15M5 15h12" stroke="#3b3a3a" /><circle cx="23" cy="24" r="11" fill="#3c3b3b" stroke="#999" /><text x="19" y="28" fill="#fff" stroke="none" fontSize="15">5</text></svg>
    </Tray>
    <ShowDesktop aria-label="Show desktop" />
  </TaskRow>
)

const Microphone = () => (
  <svg width="30" height="46" viewBox="0 0 30 46"><rect x="7" y="1" width="16" height="30" rx="8" fill="#a6a6a6" /><path d="M2 22v3q0 11 13 11t13-11v-3M15 36v8M7 44h16" fill="none" stroke="#a6a6a6" strokeWidth="3" /></svg>
)

const MeetingControls = () => (
  <Controls>
    <ControlGroup>
      <Control $w={110}>
        <Microphone />
        <span>Mute</span>
      </Control>
      <CaretButton aria-label="Audio options"><Caret /></CaretButton>
      <Control $w={110}>
        <svg width="50" height="44" viewBox="0 0 50 44">
          <rect x="1" y="8" width="34" height="28" rx="5" fill="#a6a6a6" /><path d="m38 18 11-8v24l-11-8z" fill="#a6a6a6" />
          <path d="M2 44 48 0" stroke="#1b1b1b" strokeWidth="7" /><path d="M2 43 48 1" stroke="#f0625a" strokeWidth="3" />
        </svg>
        <span>Start Video</span>
      </Control>
      <CaretButton aria-label="Video options"><Caret /></CaretButton>
    </ControlGroup>
    <ControlGroup>
      <Control $w={160}>
        <svg width="38" height="40" viewBox="0 0 38 40"><path d="M19 2q8 5 17 6v10c0 10-7 16-17 21C9 34 2 28 2 18V8q9-1 17-6z" fill="none" stroke="#a6a6a6" strokeWidth="2" /><path d="M19 2v18H2V8q9-1 17-6zM19 20h17c0 9-7 14-17 19z" fill="#a6a6a6" /></svg>
        <span>Security</span>
      </Control>
      <Control $w={172}>
        <IconLine><svg width="48" height="36" viewBox="0 0 48 36" fill="#a6a6a6"><circle cx="15" cy="8" r="8" /><circle cx="34" cy="11" r="7" /><path d="M0 35V31q0-11 15-11t15 11v4zM33 35h15v-4q0-9-13-8-5 0-5 1 4 3 3 11z" /></svg><sup>3</sup></IconLine>
        <span>Participants</span>
      </Control>
      <Control $w={160}>
        <svg width="40" height="38" viewBox="0 0 40 38"><path d="M7 1h26q7 0 7 7v14q0 7-7 7H17l-9 8v-8q-8 0-8-7V8q0-7 7-7z" fill="#a6a6a6" /></svg>
        <span>Chat</span>
      </Control>
      <Control $w={188} $green>
        <ShareLine>
          <svg width="48" height="36" viewBox="0 0 48 36"><rect width="48" height="36" rx="6" fill="#66d96c" /><path d="M24 28V11M16 18l8-8 8 8" fill="none" stroke="#1b1b1b" strokeWidth="3" /></svg>
          <Caret color="#66d96c" />
        </ShareLine>
        <span>Share Screen</span>
      </Control>
      <Control $w={284}>
        <IconLine $gap={16}>
          <svg width="40" height="40" viewBox="0 0 40 40"><rect width="40" height="40" rx="6" fill="#a6a6a6" /><path d="M12 12h4v16h-4zM24 12h4v16h-4z" fill="#1b1b1b" /></svg>
          <svg width="40" height="40" viewBox="0 0 40 40"><rect width="40" height="40" rx="6" fill="#a6a6a6" /><rect x="12" y="12" width="16" height="16" rx="3" fill="#1b1b1b" /></svg>
        </IconLine>
        <span>Pause/Stop Recording</span>
      </Control>
      <Control $w={164}>
        <svg width="44" height="42" viewBox="0 0 44 42"><circle cx="20" cy="24" r="18" fill="#a6a6a6" /><path d="M12 27q2 7 8 7t8-7" fill="none" stroke="#1b1b1b" strokeWidth="3" /><circle cx="14" cy="20" r="2" fill="#1b1b1b" /><circle cx="26" cy="20" r="2" fill="#1b1b1b" /><path d="M36 0v16M28 8h16" stroke="#1b1b1b" strokeWidth="8" /><path d="M36 1v14M29 8h14" stroke="#a6a6a6" strokeWidth="3" /></svg>
        <span>Reactions</span>
      </Control>
    </ControlGroup>
    <EndButton>End</EndButton>
  </Controls>
)

const App = () => (
  <Screen>
    <GlobalStyle />
    <MeetingHeader />
    <Browser />
    <Viewport>
      <PageColumn>
        <AdminBar />
        <ParishPage />
        <Recaptcha />
      </PageColumn>
      <ScrollBar>
        <svg width="14" height="8" viewBox="0 0 14 8"><path d="m7 1 6 6H1z" fill="#505050" /></svg>
        <ScrollTrack><ScrollThumb /></ScrollTrack>
        <svg width="14" height="8" viewBox="0 0 14 8"><path d="M1 1h12L7 7z" fill="#505050" /></svg>
      </ScrollBar>
    </Viewport>
    <Taskbar />
    <MeetingControls />
  </Screen>
)

export default App

const GlobalStyle = createGlobalStyle`
  * {
    box-sizing: border-box;
    margin: 0;
    padding: 0;
  }

  body {
    font-family: 'Open Sans', 'Noto Sans', sans-serif;
    background: #fff;
  }

  button {
    border: 0;
    background: none;
    font: inherit;
    color: inherit;
  }

  svg {
    flex-shrink: 0;
  }
`;

const Screen = styled.div`
  display: flex;
  flex-direction: column;
  height: 100vh;
  overflow: hidden;
`;

const TitleStrip = styled.div`
  flex: 0 0 38px;
`;

const MeetingBar = styled.header`
  position: relative;
  flex: 0 0 90px;
  display: flex;
  align-items: center;
  gap: 10px;
  padding: 0 26px 6px;
  background: #000;
  font-family: Inter, sans-serif;
`;

const BadgeButton = styled.button`
  display: flex;
  align-items: center;
  justify-content: center;
  width: 56px;
  height: 56px;
  border-radius: 14px;
  background: #070808;
`;

const RecordingPill = styled.div`
  display: flex;
  align-items: center;
  height: 54px;
  width: 333px;
  padding: 0 18px 0 22px;
  border-radius: 8px;
  background: #1a1a24;
  color: #f5f5f5;
  font-size: 23px;
  font-weight: 500;

  span {
    margin: 0 auto 0 18px;
  }
`;

const PillButton = styled.button`
  display: flex;
  margin-left: 36px;
`;

const ShareBanner = styled.div`
  position: absolute;
  top: 0;
  left: 1060px;
  display: flex;
  box-shadow: 0 -6px 32px rgba(0, 0, 0, .14);
`;

const ShareMessage = styled.div`
  display: flex;
  align-items: center;
  justify-content: space-between;
  width: 563px;
  height: 44px;
  padding: 0 15px 0 69px;
  border-radius: 0 0 0 10px;
  background: #6ad66c;
  color: #1d2b1f;
  font-size: 24px;
  font-family: 'Liberation Sans', Arial, sans-serif;
`;

const ViewOptions = styled.button`
  display: flex;
  align-items: center;
  justify-content: space-between;
  width: 195px;
  height: 46px;
  padding: 0 18px 2px 20px;
  border-radius: 0 0 10px 0;
  background: #232427;
  color: #f2f2f2;
  font-size: 21px;
`;

const TabStrip = styled.nav`
  flex: 0 0 50px;
  display: flex;
  padding-left: 13px;
  background: #dfdee3;
  color: #45464b;
`;

const Tab = styled.div`
  position: relative;
  flex: 0 1 358px;
  min-width: 0;
  display: flex;
  align-items: center;
  gap: 11px;
  padding: 0 11px 0 17px;
  font-size: 17px;

  ${(p) => p.$active && css`
    background: #fff;
    border-radius: 12px 12px 0 0;
  `}

  ${(p) => p.$divider && css`
    &::after {
      content: '';
      position: absolute;
      right: 0;
      top: 10px;
      height: 30px;
      border-right: 2px solid #8c8c91;
    }
  `}
`;

const TabTitle = styled.span`
  flex: 1;
  white-space: nowrap;
  mask-image: linear-gradient(90deg, #000 88%, transparent 102%);
`;

const IconButton = styled.button`
  display: flex;
`;

const NewTab = styled.button`
  display: flex;
  align-items: center;
  margin-left: 20px;
`;

const WindowControls = styled.div`
  display: flex;
  align-items: center;
  gap: 52px;
  margin-left: auto;
  padding: 0 27px 8px 0;
`;

const Toolbar = styled.div`
  flex: 0 0 56px;
  display: flex;
  align-items: center;
  gap: 16px;
  padding: 0 17px;
  background: #fff;
  border-bottom: 2px solid #d5d5d9;
`;

const ToolButton = styled.button`
  display: flex;
  align-items: center;
  justify-content: center;
  width: 32px;
  height: 36px;
  color: ${(p) => (p.$dim ? '#b4b4b8' : '#505156')};
`;

const Omnibox = styled.div`
  flex: 1;
  display: flex;
  align-items: center;
  gap: 17px;
  height: 42px;
  padding: 0 13px 0 18px;
  border-radius: 21px;
  background: #f2f2f5;
`;

const UrlInput = styled.input`
  flex: 1;
  border: 0;
  outline: 0;
  font-family: inherit;
  font-size: 20px;
  color: transparent;
  background: linear-gradient(90deg, #222 178px, #75767b 178px);
  background-clip: text;
`;

const Viewport = styled.div`
  flex: 1;
  min-height: 0;
  display: flex;
`;

const PageColumn = styled.div`
  position: relative;
  flex: 1;
  overflow: hidden;
  background: #d6ebfb;
`;

const AdminRow = styled.nav`
  display: flex;
  align-items: center;
  gap: 25px;
  height: 47px;
  padding: 0 10px;
  background: #25282e;
  color: #a0a3a7;
`;

const AdminLink = styled.a`
  display: flex;
  align-items: center;
  gap: 9px;
  color: inherit;
  text-decoration: none;

  svg {
    min-width: 30px;
  }

  span {
    color: #eee;
    font-size: 18px;
  }
`;

const Howdy = styled.div`
  display: flex;
  align-items: center;
  gap: 11px;
  margin-left: auto;
  color: #eee;
  font-size: 18px;
`;

const ScrollBar = styled.div`
  display: flex;
  flex-direction: column;
  align-items: center;
  width: 26px;
  padding: 10px 0;
  background: #f0eff2;
`;

const ScrollTrack = styled.div`
  flex: 1;
  display: flex;
  flex-direction: column;
  justify-content: flex-end;
  width: 22px;
  padding-bottom: 160px;
`;

const ScrollThumb = styled.div`
  height: 39%;
  background: #c2c1c5;
`;

const Site = styled.div`
  max-width: 2100px;
  margin: 0 auto;
`;

const Body = styled.div`
  display: flex;
  background: #fefefe;
`;

const Sidebar = styled.aside`
  width: 25%;
  background: #f9e8b9;
`;

const Main = styled.main`
  flex: 1;
  padding: 0 52px 0 60px;
  color: #333;
`;

const MapFrame = styled.div`
  position: relative;
  height: 265px;
  margin: 0 184px 90px 229px;
  overflow: hidden;
`;

const MapSvg = styled.svg`
  display: block;
  width: 100%;
  height: 100%;
  font-family: Roboto, sans-serif;
`;

const Terrain = styled.g`
  path {
    vector-effect: non-scaling-stroke;
  }
`;

const Road = styled.path`
  fill: none;
  stroke: ${(p) => (p.$edge ? '#edc86f' : '#fae7a4')};
  stroke-width: ${(p) => (p.$wide ? 6 : 4) + (p.$edge ? 2 : 0)}px;
  stroke-linejoin: round;
`;

const Labels = styled.g`
  text {
    paint-order: stroke;
    stroke: #fff;
    stroke-width: 3px;
    stroke-linejoin: round;
  }
`;

const GoogleText = styled.text`
  font-family: Lato, sans-serif;
  font-size: 30px;
  font-weight: 700;
  paint-order: stroke;
  stroke: #e6f2fd;
  stroke-width: 3px;
`;

const MapControls = styled.div`
  position: absolute;
  top: 7px;
  right: 15px;
  display: flex;
  flex-direction: column;
  gap: 55px;
`;

const Pegman = styled.button`
  display: flex;
  align-items: flex-end;
  justify-content: center;
  width: 60px;
  height: 60px;
  border-radius: 3px;
  background: #fff;
  box-shadow: 0 1px 4px rgba(0, 0, 0, .3);
`;

const ZoomBox = styled.div`
  width: 60px;
  height: 122px;
  border-radius: 3px;
  background: #fff;
  box-shadow: 0 1px 4px rgba(0, 0, 0, .3);
`;

const ZoomButton = styled.button`
  display: flex;
  align-items: center;
  justify-content: center;
  width: 46px;
  height: 50%;
  margin: 0 7px;

  & + & {
    border-top: 2px solid #e6e6e6;
  }
`;

const FoundTitle = styled.h1`
  padding-left: 45px;
  background: #225ba4;
  color: #fff;
  font-size: 58px;
  font-weight: 400;
  line-height: 99px;
`;

const Result = styled.section`
  display: grid;
  grid-template-columns: 60% 1fr;
  margin-left: 45px;
  padding: 59px 0 70px;
  border-bottom: 2px solid #d9d9db;

  > div {
    position: relative;
  }
`;

const ParishName = styled.h2`
  margin-top: 8px;
  color: #e3b045;
  font-size: 53px;
  font-weight: 400;
  line-height: 64px;
`;

const Address = styled.address`
  margin-top: 86px;
  font-size: 25px;
  font-style: normal;
  line-height: 59px;
`;

const MassTitle = styled.h3`
  margin-bottom: 18px;
  color: #e3b045;
  font-size: 45px;
  font-weight: 400;
  line-height: 54px;
`;

const TimesTable = styled.table`
  border-collapse: collapse;
  font-size: 20px;
  line-height: 33px;

  th {
    width: 155px;
    text-align: left;
  }
`;

const MoreButton = styled.button`
  height: 76px;
  margin-top: 27px;
  padding: 0 37px;
  border: 3px solid #225ba4;
  border-radius: 4px;
  color: #225ba4;
  font-size: 22px;
  font-weight: 700;
`;

const TextCursor = styled.svg`
  position: absolute;
  top: 133px;
  left: 180px;
`;

const EditRow = styled.div`
  margin-left: 45px;
  font-size: 24px;
  line-height: 89px;

  a {
    color: #e3b045;
  }
`;

const FooterTitle = styled.h2`
  padding-left: 46px;
  background: linear-gradient(90deg, #225ba4, #62a5dc 50%, #225ba4);
  color: #fff;
  font-size: 57px;
  font-weight: 300;
  line-height: 99px;
`;

const Footer = styled.footer`
  display: flex;
`;

const FooterLeft = styled.div`
  display: flex;
  justify-content: space-between;
  width: 710px;
  height: 380px;
  padding: 0 86px 0 90px;
  background: #59b0f9;
`;

const SealText = styled.text`
  fill: #2360ad;
  font-family: 'Liberation Serif', serif;
  font-style: italic;
  font-size: 27px;
`;

const SocialLinks = styled.div`
  display: flex;
  flex-direction: column;
  align-items: center;
  gap: 22px;
  width: 52px;
  padding-top: 30px;
  color: #fff;

  a {
    display: flex;
    align-items: center;
    justify-content: center;
    height: 60px;
    color: inherit;
  }
`;

const SocialTile = styled.span`
  display: flex;
  align-items: ${(p) => (p.$top ? 'flex-start' : 'center')};
  justify-content: center;
  width: 52px;
  height: 52px;
  border-radius: 7px;
  background: #fff;
  color: #59b0f9;
  font-family: Roboto, sans-serif;
  font-size: 20px;
  font-weight: 700;
`;

const FooterMap = styled.div`
  position: relative;
  flex: 1;
  height: 299px;
`;

const PlaceCard = styled.div`
  position: absolute;
  top: 15px;
  left: 16px;
  display: flex;
  flex-direction: column;
  width: 437px;
  height: 81px;
  padding: 14px 18px;
  border-radius: 2px;
  background: #fff;
  box-shadow: 0 1px 4px rgba(0, 0, 0, .3);
  font-family: Roboto, sans-serif;

  strong {
    font-size: 21px;
    font-weight: 500;
    line-height: 28px;
  }

  a {
    color: #427fed;
    font-size: 18px;
    line-height: 28px;
    text-decoration: none;
  }
`;

const FooterControls = styled.div`
  position: absolute;
  top: 204px;
  right: 14px;
`;

const RecaptchaBadge = styled.div`
  position: absolute;
  right: 0;
  bottom: 20px;
  display: flex;
  flex-direction: column;
  align-items: center;
  gap: 3px;
  width: 105px;
  height: 91px;
  padding-top: 11px;
  border-radius: 4px 0 0 4px;
  background: #fafafb;
  box-shadow: 0 0 6px #888;
  color: #606164;
  font-family: Roboto, sans-serif;

  small {
    font-size: 12px;
  }
`;

const TaskRow = styled.div`
  flex: 0 0 44px;
  display: flex;
  align-items: flex-start;
  height: 44px;
  overflow: hidden;
  background: linear-gradient(90deg, #3d3f42, #43403f 12%, #4d292d 22%, #3a3736 31%, #3d3a3a 50%, #4a3a3e 62%, #473c41 75%, #3f3e3e 88%, #454240);
  color: #fff;
`;

const StartButton = styled.button`
  display: flex;
  align-items: center;
  justify-content: center;
  width: 73px;
  height: 60px;
`;

const SearchBox = styled.label`
  display: flex;
  align-items: center;
  gap: 18px;
  width: 515px;
  height: 64px;
  padding: 0 16px 4px;
  border-top: 2px solid #ccc;
  background: #f2f2f2;

  input {
    flex: 1;
    border: 0;
    outline: 0;
    background: none;
    font-family: inherit;
    font-size: 21px;
  }

  input::placeholder {
    color: #3b3b3b;
  }
`;

const TaskApps = styled.div`
  display: flex;
  width: 1104px;
`;

const TaskApp = styled.button`
  flex: 1;
  display: flex;
  align-items: center;
  justify-content: center;
  height: 60px;
  background: ${(p) => (p.$active ? '#5d6062' : 'none')};
`;

const IconText = styled.text`
  fill: ${(p) => p.$color || '#fff'};
  font-family: Roboto, sans-serif;
  font-weight: 700;
`;

const Tray = styled.div`
  display: flex;
  align-items: center;
  gap: 13px;
  height: 60px;
  margin-left: auto;
  padding-right: 19px;

  > svg {
    fill: none;
    stroke: #f2f2f2;
    stroke-width: 2px;
  }

  > svg:first-child {
    margin-right: 16px;
  }
`;

const Clock = styled.div`
  display: flex;
  flex-direction: column;
  align-items: center;
  width: 92px;
  margin-right: 8px;
  font-size: 18px;
  line-height: 29px;
`;

const ShowDesktop = styled.button`
  width: 7px;
  height: 60px;
  border-left: 1px solid #8a8a8a;
`;

const Controls = styled.footer`
  flex: 0 0 106px;
  display: grid;
  grid-template-columns: 979px 1fr auto;
  align-items: center;
  padding-right: 24px;
  background: #1b1b1b;
  color: #a6a6a6;
  font-family: Inter, sans-serif;
`;

const ControlGroup = styled.div`
  display: flex;
  align-items: flex-start;

  &:first-child {
    padding-left: 37px;
  }
`;

const Control = styled.button`
  display: grid;
  grid-template-rows: 50px 40px;
  align-items: center;
  justify-content: center;
  justify-items: center;
  width: ${(p) => p.$w}px;
  color: ${(p) => (p.$green ? '#66d96c' : '#a6a6a6')};
  font-size: 24px;
  white-space: nowrap;
`;

const CaretButton = styled.button`
  display: flex;
  align-items: center;
  width: 67px;
  height: 52px;
`;

const IconLine = styled.span`
  display: flex;
  gap: ${(p) => p.$gap || 6}px;
  padding-left: ${(p) => (p.$gap ? 0 : 20)}px;

  sup {
    font-size: 24px;
    line-height: 28px;
  }
`;

const ShareLine = styled.span`
  display: flex;
  align-items: center;
  gap: 36px;
  padding-left: 54px;
`;

const EndButton = styled.button`
  width: 128px;
  height: 56px;
  border-radius: 16px;
  background: #ab332f;
  color: #fff;
  font-size: 25px;
  font-weight: 700;
`;
